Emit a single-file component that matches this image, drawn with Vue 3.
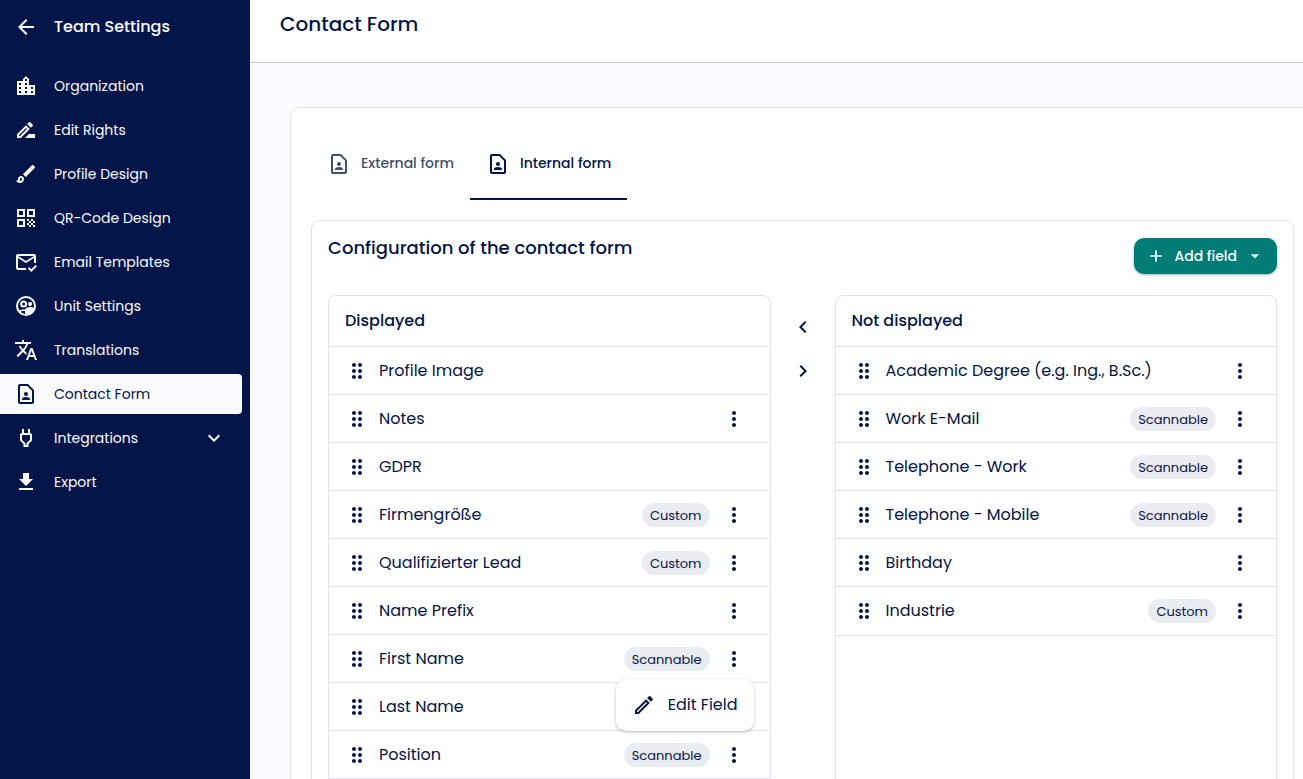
<script setup>
import { ref } from 'vue'

const icons = {
  back: 'M20 11H7.83l5.59-5.59L12 4l-8 8 8 8 1.41-1.41L7.83 13H20v-2z',
  city: 'M15 11V5l-3-3-3 3v2H3v14h18V11h-6zm-8 8H5v-2h2v2zm0-4H5v-2h2v2zm0-4H5V9h2v2zm6 8h-2v-2h2v2zm0-4h-2v-2h2v2zm0-4h-2V9h2v2zm0-4h-2V5h2v2zm6 12h-2v-2h2v2zm0-4h-2v-2h2v2z',
  rename: 'M15 16l-4 4h10v-4zM12.06 7.19L3 16.25V20h3.75l9.06-9.06-3.75-3.75zM5.92 18H5v-.92l7.06-7.06.92.92L5.92 18zM18.71 8.04c.39-.39.39-1.02 0-1.41l-2.34-2.34c-.2-.2-.45-.29-.71-.29s-.51.1-.7.29l-1.83 1.83 3.75 3.75 1.83-1.83z',
  brush: 'M7 16c.55 0 1 .45 1 1 0 1.1-.9 2-2 2-.17 0-.33-.02-.5-.05.31-.55.5-1.21.5-1.95 0-.55.45-1 1-1M18.67 3c-.26 0-.51.1-.71.29L9 12.25 11.75 15l8.96-8.96c.39-.39.39-1.02 0-1.41l-1.34-1.34c-.2-.2-.45-.29-.7-.29zM7 14c-1.66 0-3 1.34-3 3 0 1.31-1.16 2-2 2 .92 1.22 2.49 2 4 2 2.21 0 4-1.79 4-4 0-1.66-1.34-3-3-3z',
  qr: 'M3 11h8V3H3v8zm2-6h4v4H5V5zM3 21h8v-8H3v8zm2-6h4v4H5v-4zM13 3v8h8V3h-8zm6 6h-4V5h4v4zM19 19h2v2h-2zM13 13h2v2h-2zM15 15h2v2h-2zM13 17h2v2h-2zM15 19h2v2h-2zM17 17h2v2h-2zM17 13h2v2h-2zM19 15h2v2h-2z',
  mail: 'M12 18H4V8l8 5 8-5v5h2V6c0-1.1-.9-2-2-2H4c-1.1 0-2 .9-2 2v12c0 1.1.9 2 2 2h8v-2zm8-12-8 5-8-5h16zm-2.66 16-3.54-3.54 1.41-1.41 2.12 2.12 4.24-4.24L23 16.34 17.34 22z',
  users: 'M12 2a10 10 0 1 0 0 20 10 10 0 0 0 0-20zM4 12a8 8 0 1 1 16 0c0 .7-.1 1.400-.26 2.050-.9-.75-2.400-1.050-3.640-1.050-1.500 0-4.570.800-5.100 2.500-.35-.05-.95-.100-1.390-.100-1.600 0-3.100.350-4.160.900A7.900 7.900 0 0 1 4 12zm2.400 5.700c.7-.45 1.900-.8 3.210-.8.500 0 .950.050 1.390.130v2.900a8 8 0 0 1-4.600-2.230zM9.610 6.500a3.500 3.500 0 1 0 0 7 3.500 3.500 0 0 0 0-7zm0 2a1.500 1.500 0 1 1 0 3 1.500 1.500 0 0 1 0-3zM16.100 8a2.100 2.100 0 1 0 0 4.200 2.100 2.100 0 0 0 0-4.200z',
  translate: 'M12.87 15.07l-2.54-2.51.03-.03c1.74-1.94 2.98-4.17 3.71-6.53H17V4h-7V2H8v2H1v1.99h11.17C11.5 7.92 10.44 9.75 9 11.35 8.07 10.32 7.3 9.19 6.69 8h-2c.73 1.63 1.73 3.17 2.98 4.56l-5.09 5.02L4 19l5-5 3.11 3.11.76-2.04zM18.5 10h-2L12 22h2l1.12-3h4.75L21 22h2l-4.5-12zm-2.62 7l1.62-4.33L19.12 17h-3.24z',
  contact: 'M13.17 4L18 8.83V20H6V4h7.17M14 2H6c-1.1 0-2 .9-2 2v16c0 1.1.9 2 2 2h12c1.1 0 2-.9 2-2V8l-6-6zm-2 12c1.1 0 2-.9 2-2s-.9-2-2-2-2 .9-2 2 .9 2 2 2zm4 3.43c0-.81-.48-1.53-1.22-1.85-.85-.37-1.79-.58-2.78-.58-.99 0-1.93.21-2.78.58C8.48 15.9 8 16.62 8 17.43V18h8v-.57z',
  power: 'M16 9v4.66l-3.5 3.51V19h-1v-1.83L8 13.65V9h8m0-6h-2v4h-4V3H8v4h-.01C6.9 6.99 6 7.89 6 8.98v5.52L9.5 18v3h5v-3l3.5-3.51V9c0-1.1-.9-2-2-2V3z',
  download: 'M19 9h-4V3H9v6H5l7 7 7-7zM5 18v2h14v-2H5z',
  down: 'M16.59 8.59L12 13.17 7.41 8.59 6 10l6 6 6-6z',
  left: 'M15.41 7.41L14 6l-6 6 6 6 1.41-1.41L10.83 12z',
  right: 'M10 6L8.59 7.41 13.17 12l-4.58 4.59L10 18l6-6z',
  plus: 'M19 13h-6v6h-2v-6H5v-2h6V5h2v6h6v2z',
  caret: 'M7 10l5 5 5-5z',
  edit: 'M14.06 9.02l.92.92L5.92 19H5v-.92l9.06-9.06M17.66 3c-.25 0-.51.1-.7.29l-1.83 1.83 3.75 3.75 1.83-1.83c.39-.39.39-1.02 0-1.41l-2.34-2.34c-.2-.2-.45-.29-.71-.29zm-3.6 3.19L3 17.25V21h3.75L17.81 9.94l-3.75-3.75z',
  drag: 'M11 18c0 1.100-.9 2-2 2s-2-.9-2-2 .9-2 2-2 2 .9 2 2zm-2-8c-1.100 0-2 .9-2 2s.9 2 2 2 2-.9 2-2-.9-2-2-2zm0-6c-1.100 0-2 .9-2 2s.9 2 2 2 2-.9 2-2-.9-2-2-2zm6 4c1.100 0 2-.9 2-2s-.9-2-2-2-2 .9-2 2 .9 2 2 2zm0 2c-1.100 0-2 .9-2 2s.9 2 2 2 2-.9 2-2-.9-2-2-2zm0 6c-1.100 0-2 .9-2 2s.9 2 2 2 2-.9 2-2-.9-2-2-2z',
  more: 'M12 8c1.100 0 2-.9 2-2s-.9-2-2-2-2 .9-2 2 .9 2 2 2zm0 2c-1.100 0-2 .9-2 2s.9 2 2 2 2-.9 2-2-.9-2-2-2zm0 6c-1.100 0-2 .9-2 2s.9 2 2 2 2-.9 2-2-.9-2-2-2z',
}

const nav = [
  { label: 'Organization', icon: 'city' },
  { label: 'Edit Rights', icon: 'rename' },
  { label: 'Profile Design', icon: 'brush' },
  { label: 'QR-Code Design', icon: 'qr' },
  { label: 'Email Templates', icon: 'mail' },
  { label: 'Unit Settings', icon: 'users' },
  { label: 'Translations', icon: 'translate' },
  { label: 'Contact Form', icon: 'contact', active: true },
  { label: 'Integrations', icon: 'power', expandable: true },
  { label: 'Export', icon: 'download' },
]

const tabs = ['External form', 'Internal form']
const activeTab = ref('Internal form')
const openMenu = ref('First Name')

const columns = [
  {
    title: 'Displayed',
    fields: [
      { name: 'Profile Image' },
      { name: 'Notes', menu: true },
      { name: 'GDPR' },
      { name: 'Firmengröße', chip: 'Custom', menu: true },
      { name: 'Qualifizierter Lead', chip: 'Custom', menu: true },
      { name: 'Name Prefix', menu: true },
      { name: 'First Name', chip: 'Scannable', menu: true },
      { name: 'Last Name', menu: true },
      { name: 'Position', chip: 'Scannable', menu: true },
    ],
  },
  {
    title: 'Not displayed',
    fields: [
      { name: 'Academic Degree (e.g. Ing., B.Sc.)', menu: true },
      { name: 'Work E-Mail', chip: 'Scannable', menu: true },
      { name: 'Telephone - Work', chip: 'Scannable', menu: true },
      { name: 'Telephone - Mobile', chip: 'Scannable', menu: true },
      { name: 'Birthday', menu: true },
      { name: 'Industrie', chip: 'Custom', menu: true },
    ],
  },
]

function toggleMenu(name) {
  openMenu.value = openMenu.value === name ? '' : name
}
</script>

<template>
  <div class="app">
    <aside class="sidebar">
      <div class="side-head">
        <button class="plain" type="button" aria-label="Back">
          <svg class="icon" viewBox="0 0 24 24"><path :d="icons.back" /></svg>
        </button>
        <span class="side-title">Team Settings</span>
      </div>
      <nav class="nav">
        <a v-for="item in nav" :key="item.label" href="#" class="nav-item" :class="{ active: item.active }">
          <svg class="icon" viewBox="0 0 24 24"><path :d="icons[item.icon]" fill-rule="evenodd" /></svg>
          <span class="nav-label">{{ item.label }}</span>
          <svg v-if="item.expandable" class="icon" viewBox="0 0 24 24"><path :d="icons.down" /></svg>
        </a>
      </nav>
    </aside>

    <main class="main">
      <header class="topbar"><h1>Contact Form</h1></header>
      <section class="card">
        <div class="tabs" role="tablist">
          <button
            v-for="tab in tabs"
            :key="tab"
            type="button"
            role="tab"
            class="tab"
            :class="{ selected: tab === activeTab }"
            :aria-selected="tab === activeTab"
            @click="activeTab = tab"
          >
            <svg class="icon" viewBox="0 0 24 24"><path :d="icons.contact" /></svg>
            <span class="tab-label">{{ tab }}</span>
          </button>
        </div>

        <div class="panel">
          <div class="panel-head">
            <h2>Configuration of the contact form</h2>
            <button class="add" type="button">
              <svg class="icon small" viewBox="0 0 24 24"><path :d="icons.plus" /></svg>
              <span>Add field</span>
              <svg class="icon small" viewBox="0 0 24 24"><path :d="icons.caret" /></svg>
            </button>
          </div>

          <div class="columns">
            <template v-for="(column, index) in columns" :key="column.title">
              <div v-if="index === 1" class="movers">
                <button class="plain mover" type="button" aria-label="Move left">
                  <svg class="icon" viewBox="0 0 24 24"><path :d="icons.left" /></svg>
                </button>
                <button class="plain mover" type="button" aria-label="Move right">
                  <svg class="icon" viewBox="0 0 24 24"><path :d="icons.right" /></svg>
                </button>
              </div>
              <div class="column">
                <h3>{{ column.title }}</h3>
                <ul>
                  <li v-for="field in column.fields" :key="field.name">
                    <svg class="icon" viewBox="0 0 24 24"><path :d="icons.drag" /></svg>
                    <span class="field-name">{{ field.name }}</span>
                    <span v-if="field.chip" class="chip">{{ field.chip }}</span>
                    <div v-if="field.menu" class="menu-anchor">
                      <button
                        class="plain menu-button"
                        type="button"
                        :aria-label="'Options for ' + field.name"
                        @click="toggleMenu(field.name)"
                      >
                        <svg class="icon" viewBox="0 0 24 24"><path :d="icons.more" /></svg>
                      </button>
                      <div v-if="openMenu === field.name" class="menu">
                        <button class="plain menu-item" type="button">
                          <svg class="icon" viewBox="0 0 24 24"><path :d="icons.edit" /></svg>
                          <span>Edit Field</span>
                        </button>
                      </div>
                    </div>
                  </li>
                </ul>
              </div>
            </template>
          </div>
        </div>
      </section>
    </main>
  </div>
</template>

<style>
body {
  margin: 0;
}
</style>

<style scoped>
.app {
  display: flex;
  height: 100vh;
  overflow: hidden;
  background: #fafbff;
  color: #031549;
  font-family: Poppins, Inter, "Noto Sans", sans-serif;
  font-size: 16px;
  line-height: 24px;
}

h1,
h2,
h3,
ul {
  margin: 0;
  padding: 0;
  font-weight: 500;
}

.icon {
  display: block;
  flex: none;
  width: 24px;
  height: 24px;
  fill: currentColor;
}

.icon.small {
  width: 20px;
  height: 20px;
}

.plain {
  display: flex;
  align-items: center;
  padding: 0;
  border: 0;
  background: none;
  color: inherit;
  font: inherit;
  cursor: pointer;
}

.sidebar {
  flex: none;
  width: 250px;
  background: #031549;
  color: #fafbff;
}

.side-head {
  display: flex;
  align-items: center;
  gap: 16px;
  height: 54px;
  padding-left: 14px;
}

.side-title {
  font-weight: 500;
}

.nav {
  display: flex;
  flex-direction: column;
  gap: 4px;
  padding: 12px 8px 0 0;
}

.nav-item {
  display: flex;
  align-items: center;
  gap: 16px;
  height: 40px;
  padding: 0 16px 0 14px;
  border-radius: 0 4px 4px 0;
  color: #fafbff;
  font-size: 14px;
  text-decoration: none;
}

.nav-item.active {
  background: #fafbff;
  color: #031549;
}

.nav-label {
  flex: 1;
}

.main {
  flex: 1;
  min-width: 0;
  overflow: hidden;
}

.topbar {
  height: 50px;
  padding: 12px 30px 0;
  border-bottom: 1px solid #c3c8d6;
  background: #fff;
}

h1 {
  font-size: 20px;
}

.card {
  margin: 44px -12px 0 40px;
  padding: 20px;
  border: 1px solid #e2e2ee;
  border-radius: 10px;
  background: #fff;
}

.tabs {
  display: flex;
  margin-bottom: 20px;
}

.tab {
  display: flex;
  align-items: center;
  gap: 10px;
  height: 72px;
  padding: 0 16px;
  border: 0;
  border-top: 2px solid transparent;
  border-bottom: 2px solid transparent;
  background: none;
  color: #425069;
  font: inherit;
  font-size: 14px;
  font-weight: 500;
  cursor: pointer;
}

.tab-label {
  padding-bottom: 2px;
}

.tab.selected {
  border-bottom-color: #031549;
  color: #031549;
}

.panel {
  padding: 16px;
  border: 1px solid #e2e2ee;
  border-radius: 8px;
}

.panel-head {
  display: flex;
  justify-content: space-between;
  align-items: flex-start;
  height: 58px;
}

h2 {
  font-size: 18px;
  line-height: 22px;
}

.add {
  display: flex;
  align-items: center;
  gap: 8px;
  height: 36px;
  margin-top: 1px;
  padding: 0 12px;
  border: 0;
  border-radius: 10px;
  background: #007c77;
  color: #fafbff;
  font: inherit;
  font-size: 14px;
  font-weight: 500;
  box-shadow: 0 1px 3px rgba(3, 21, 73, 0.35);
  cursor: pointer;
}

.columns {
  display: flex;
  min-height: 100vh;
}

.column {
  flex: 1;
  min-width: 0;
  border: 1px solid #e2e2ee;
  border-radius: 8px;
}

h3 {
  padding: 13px 16px;
  border-bottom: 1px solid #e2e2ee;
  font-size: 16px;
}

ul {
  list-style: none;
  font-weight: 400;
}

li {
  display: flex;
  align-items: center;
  height: 47px;
  padding: 0 16px;
  border-bottom: 1px solid #e2e2ee;
}

.column:last-child li:last-child {
  height: 48px;
}

.field-name {
  flex: 1;
  padding-left: 10px;
}

.chip {
  margin-right: 4px;
  padding: 2px 8px 0;
  border-radius: 12px;
  background: #ebecf1;
  font-size: 13px;
  line-height: 22px;
}

.menu-anchor {
  position: relative;
}

.menu-button {
  justify-content: center;
  width: 40px;
  height: 40px;
}

.menu {
  position: absolute;
  z-index: 1;
  top: 100%;
  right: 0;
  padding: 8px 0;
  border-radius: 10px;
  background: #fff;
  box-shadow: 0 1px 3px rgba(3, 21, 73, 0.3);
}

.menu-item {
  gap: 12px;
  height: 36px;
  padding: 0 16px;
  white-space: nowrap;
}

.movers {
  display: flex;
  flex: none;
  flex-direction: column;
  gap: 4px;
  width: 64px;
  padding-top: 12px;
}

.mover {
  align-self: center;
  justify-content: center;
  width: 40px;
  height: 40px;
}
</style>
